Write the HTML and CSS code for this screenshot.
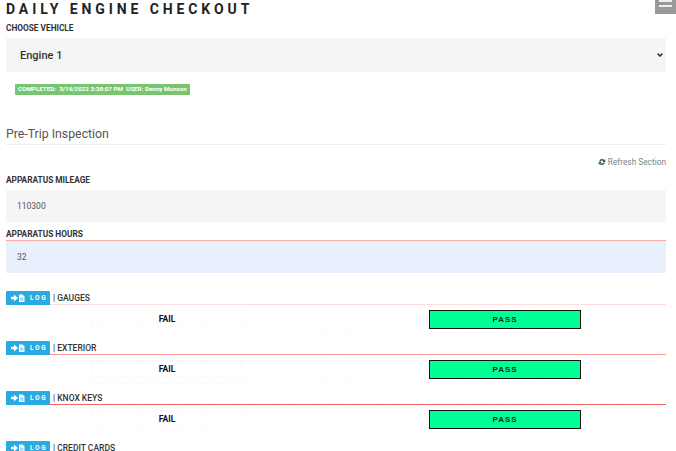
FILE: index.html
```html
<!DOCTYPE html>
<html lang="en">
<head>
<meta charset="utf-8">
<title>Daily Engine Checkout</title>
<link rel="stylesheet" href="styles.css">
</head>
<body>
<button class="menu" aria-label="Menu"><span></span><span></span></button>
<main class="page">
  <h1 class="title">DAILY ENGINE CHECKOUT</h1>
  <label class="label label-vehicle">CHOOSE VEHICLE</label>
  <div class="select">
    <span>Engine 1</span>
    <svg class="chev" width="6" height="4" viewBox="0 0 6 4"><path d="M0.6 0.6 3 3 5.4 0.6" fill="none" stroke="#333" stroke-width="1.5"/></svg>
  </div>
  <div class="status-wrap"><span class="status">COMPLETED: &nbsp;3/19/2022 3:38:07 PM &nbsp;USER: Denny Munson</span></div>
  <h2 class="section">Pre-Trip Inspection</h2>
  <div class="refresh">
    <svg width="8" height="8" viewBox="0 0 16 16"><path d="M2.5 7A5.6 5.6 0 0 1 12.4 4L14.5 2v6h-6l2.2-2.2A3.4 3.4 0 0 0 5 7.3zM13.5 9A5.6 5.6 0 0 1 3.6 12L1.5 14V8h6l-2.2 2.2A3.4 3.4 0 0 0 11 8.7z" fill="#3f5a55"/></svg>
    <span>Refresh Section</span>
  </div>
  <label class="label label-mileage">APPARATUS MILEAGE</label>
  <div class="input">110300</div>
  <label class="label label-hours">APPARATUS HOURS</label>
  <div class="input input-active">32</div>

  <section class="item item-first">
    <header class="item-head line-1">
      <span class="log"><svg class="log-icon" width="14" height="8" viewBox="0 0 14 8"><path d="M0 2.8h3V.6L7 4 3 7.4V5.2H0z" fill="#fff"/><path d="M8 .5h3.5L13.5 2.5V8H8z" fill="#fff"/><path d="M9 4.2h3.5M9 6h3.5" stroke="#29abe2" stroke-width=".7"/></svg><span>LOG</span></span>
      <span class="item-name">| GAUGES</span>
    </header>
    <div class="choices">
      <div class="cell"><div class="fail">FAIL</div></div>
      <div class="cell"><div class="pass">PASS</div></div>
    </div>
  </section>
  <section class="item">
    <header class="item-head line-2">
      <span class="log"><svg class="log-icon" width="14" height="8" viewBox="0 0 14 8"><path d="M0 2.8h3V.6L7 4 3 7.4V5.2H0z" fill="#fff"/><path d="M8 .5h3.5L13.5 2.5V8H8z" fill="#fff"/><path d="M9 4.2h3.5M9 6h3.5" stroke="#29abe2" stroke-width=".7"/></svg><span>LOG</span></span>
      <span class="item-name">| EXTERIOR</span>
    </header>
    <div class="choices">
      <div class="cell"><div class="fail">FAIL</div></div>
      <div class="cell"><div class="pass">PASS</div></div>
    </div>
  </section>
  <section class="item">
    <header class="item-head line-3">
      <span class="log"><svg class="log-icon" width="14" height="8" viewBox="0 0 14 8"><path d="M0 2.8h3V.6L7 4 3 7.4V5.2H0z" fill="#fff"/><path d="M8 .5h3.5L13.5 2.5V8H8z" fill="#fff"/><path d="M9 4.2h3.5M9 6h3.5" stroke="#29abe2" stroke-width=".7"/></svg><span>LOG</span></span>
      <span class="item-name">| KNOX KEYS</span>
    </header>
    <div class="choices">
      <div class="cell"><div class="fail">FAIL</div></div>
      <div class="cell"><div class="pass">PASS</div></div>
    </div>
  </section>
  <section class="item">
    <header class="item-head line-3">
      <span class="log"><svg class="log-icon" width="14" height="8" viewBox="0 0 14 8"><path d="M0 2.8h3V.6L7 4 3 7.4V5.2H0z" fill="#fff"/><path d="M8 .5h3.5L13.5 2.5V8H8z" fill="#fff"/><path d="M9 4.2h3.5M9 6h3.5" stroke="#29abe2" stroke-width=".7"/></svg><span>LOG</span></span>
      <span class="item-name">| CREDIT CARDS</span>
    </header>
  </section>
</main>
</body>
</html>
```
FILE: styles.css
```css
html, body { margin: 0; padding: 0; height: 451px; overflow: hidden; background: #fff; }
body { font-family: Roboto, "Liberation Sans", sans-serif; color: #333; }
.page { width: 660px; margin-left: 6px; }
.menu { position: absolute; top: 0; left: 655px; width: 21px; height: 14px; padding: 0; border: 0; background: #999; display: flex; flex-direction: column; align-items: center; gap: 3px; }
.menu span { display: block; width: 13px; height: 2px; background: #eee; }
.title { margin: 0; padding-top: 1px; height: 17px; line-height: 17px; font-size: 14px; font-weight: 700; letter-spacing: 3.9px; color: #222; }
.label { display: block; font-size: 8.3px; line-height: 11px; font-weight: 700; color: #333; }
.label-vehicle { margin-top: 5px; }
.select { margin-top: 4px; height: 34px; background: #f5f5f5; display: flex; align-items: center; justify-content: space-between; padding: 0 3px 0 14px; box-sizing: border-box; font-size: 11px; font-weight: 500; color: #333; }
.status-wrap { margin-top: 12px; padding-left: 9px; height: 11px; display: flex; }
.status { display: block; height: 11px; line-height: 11px; padding: 0 3px; background: #77c66f; border-radius: 1px; color: #fff; font-size: 6.25px; font-weight: 700; white-space: nowrap; }
.section { margin: 31px 0 0; height: 17px; line-height: 17px; padding-bottom: 1px; border-bottom: 1px solid #eee; font-size: 12.3px; font-weight: 400; color: #555; box-sizing: content-box; }
.refresh { margin-top: 11px; height: 11px; display: flex; justify-content: flex-end; align-items: center; gap: 2px; font-size: 8.3px; color: #7a8585; }
.label-mileage { margin-top: 8px; }
.input { height: 32px; line-height: 32px; padding-left: 11px; background: #f5f5f5; font-size: 8.5px; color: #555; box-sizing: border-box; }
.label-mileage + .input { margin-top: 4px; }
.label-hours { margin-top: 7px; }
.input-active { height: 33px; background: #e8f0fe; border-top: 1px solid #faa; }
.item { height: 50px; }
.item-first { margin-top: 18px; }
.item-head { height: 14px; display: flex; align-items: center; gap: 3px; box-sizing: border-box; }
.line-1 { border-bottom: 1px solid #fdd; }
.line-2 { border-bottom: 1px solid #f99; }
.line-3 { border-bottom: 1px solid #e66; }
.log { display: flex; align-items: center; gap: 5px; width: 44px; height: 14px; flex: none; padding-left: 5px; box-sizing: border-box; background: #29abe2; border-radius: 1px 1px 0 0; color: #fff; font-size: 6.5px; font-weight: 700; letter-spacing: 1.7px; }
.log-icon { flex: none; }
.item-name { font-size: 8.5px; font-weight: 500; color: #333; }
.choices { display: grid; grid-template-columns: 322px 322px; justify-content: space-between; margin-top: 2px; }
.cell { height: 26px; padding-top: 2px; box-sizing: border-box; border: 1px dashed #fafafa; display: flex; justify-content: center; }
.fail { width: 152px; height: 17px; line-height: 17px; text-align: center; border: 1px dashed #f8f8f8; box-sizing: border-box; font-size: 8.5px; font-weight: 700; color: #111; }
.pass { width: 152px; height: 19px; line-height: 18px; text-align: center; background: #00ff94; border: 1px solid #111; box-sizing: border-box; font-family: "Liberation Sans", sans-serif; font-size: 8px; font-weight: 700; letter-spacing: 1px; color: #222; }
```
